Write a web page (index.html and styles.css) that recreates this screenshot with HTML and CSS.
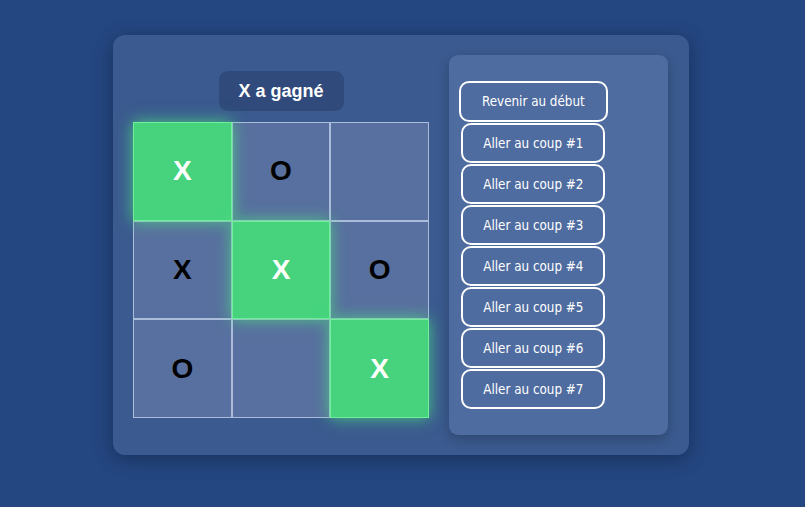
FILE: index.html
```html
<!DOCTYPE html>
<html lang="fr">
<head>
<meta charset="utf-8">
<title>Morpion</title>
<link rel="stylesheet" href="styles.css">
</head>
<body>
<div class="game">
  <div class="game-board">
    <div class="status">X a gagné</div>
    <div class="board">
      <div class="cell win">X</div>
      <div class="cell">O</div>
      <div class="cell"></div>
      <div class="cell">X</div>
      <div class="cell win">X</div>
      <div class="cell">O</div>
      <div class="cell">O</div>
      <div class="cell"></div>
      <div class="cell win">X</div>
    </div>
  </div>
  <div class="game-info">
    <ol class="moves">
      <li><button class="move first">Revenir au début</button></li>
      <li><button class="move">Aller au coup #1</button></li>
      <li><button class="move">Aller au coup #2</button></li>
      <li><button class="move">Aller au coup #3</button></li>
      <li><button class="move">Aller au coup #4</button></li>
      <li><button class="move">Aller au coup #5</button></li>
      <li><button class="move">Aller au coup #6</button></li>
      <li><button class="move">Aller au coup #7</button></li>
    </ol>
  </div>
</div>
</body>
</html>
```

FILE: styles.css
```css
html, body {
  margin: 0;
  padding: 0;
}
body {
  background: #244681;
  min-height: 507px;
  font-family: "Liberation Sans", Arial, sans-serif;
  display: flex;
  justify-content: flex-start;
  align-items: flex-start;
  padding: 35px 0 0 113px;
  box-sizing: border-box;
}
.game {
  display: flex;
  gap: 20px;
  padding: 20px 21px 20px 20px;
  background: #3b5a8f;
  border-radius: 12px;
  box-shadow: 0 4px 20px rgba(0, 0, 0, 0.3);
}
.game-board {
  display: flex;
  flex-direction: column;
  align-items: center;
  justify-content: flex-start;
  padding-top: 16px;
  gap: 11px;
  width: 296px;
}
.status {
  background: #2f4a7b;
  color: #fff;
  font-weight: bold;
  font-size: 18px;
  height: 40px;
  width: 125px;
  display: flex;
  align-items: center;
  justify-content: center;
  border-radius: 9px;
}
.board {
  display: grid;
  grid-template-columns: repeat(3, 1fr);
  grid-template-rows: repeat(3, 1fr);
  width: 296px;
  height: 296px;
}
.cell {
  box-sizing: border-box;
  border: 1px solid rgba(200, 215, 240, 0.75);
  background: #58709f;
  display: flex;
  align-items: center;
  justify-content: center;
  font-weight: bold;
  font-size: 28px;
  color: #000;
  position: relative;
}
.cell.win {
  background: #47d37e;
  border: 1px solid #72ef9a;
  color: #fff;
  box-shadow: 0 0 15px rgba(74, 226, 128, 0.8);
  z-index: 1;
}
.game-info {
  width: 219px;
  background: #4f6ca0;
  border-radius: 9px;
  box-shadow: 0 4px 12px rgba(0, 0, 0, 0.22);
  padding: 26px 10px 26px 10px;
  box-sizing: border-box;
}
.moves {
  list-style: none;
  margin: 0;
  padding: 0;
  display: inline-flex;
  flex-direction: column;
  align-items: center;
  gap: 1px;
}
.move {
  font-family: "DejaVu Sans Condensed", "DejaVu Sans", sans-serif;
  font-stretch: condensed;
  font-size: 13.3px;
  color: #fff;
  background: transparent;
  border: 2px solid #fff;
  border-radius: 10px;
  height: 40px;
  padding: 0 20px;
  cursor: pointer;
}
.move.first {
  height: 41px;
  padding: 0 21px;
}
```
